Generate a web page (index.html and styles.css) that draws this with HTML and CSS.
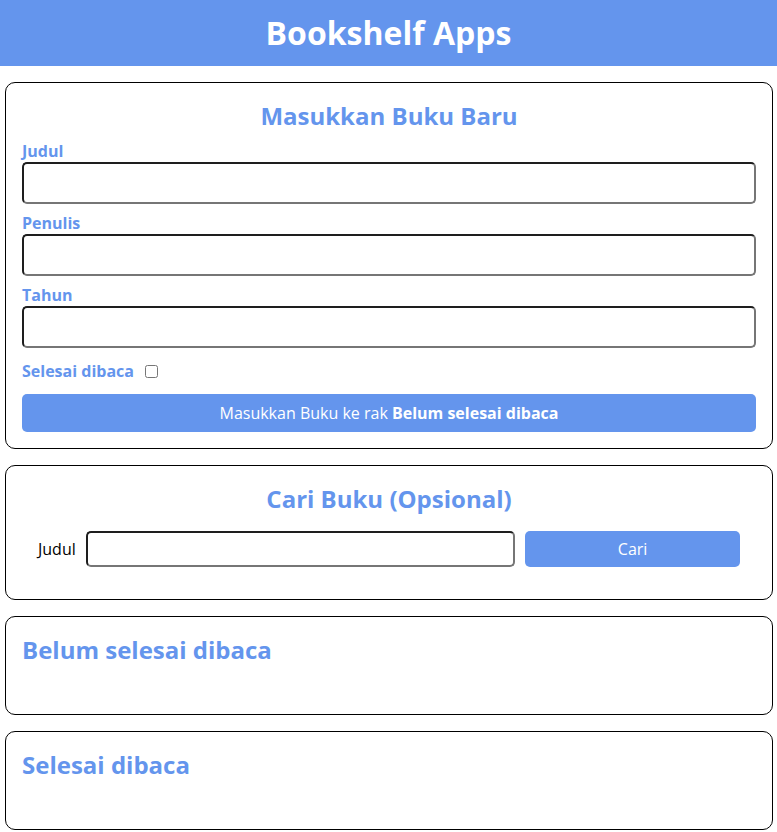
FILE: index.html
```html
<!DOCTYPE html>
<html lang="id">
<head>
<meta charset="utf-8">
<title>Bookshelf Apps</title>
<link rel="stylesheet" href="styles.css">
</head>
<body>
<header class="head-bar">
  <h1>Bookshelf Apps</h1>
</header>
<main class="main">
  <section class="input-section">
    <h2>Masukkan Buku Baru</h2>
    <form class="input-form">
      <div class="input">
        <label for="inputBookTitle">Judul</label>
        <input id="inputBookTitle" type="text">
      </div>
      <div class="input">
        <label for="inputBookAuthor">Penulis</label>
        <input id="inputBookAuthor" type="text">
      </div>
      <div class="input">
        <label for="inputBookYear">Tahun</label>
        <input id="inputBookYear" type="text">
      </div>
      <div class="input-inline">
        <label for="inputBookIsComplete">Selesai dibaca</label>
        <input id="inputBookIsComplete" type="checkbox">
      </div>
      <button class="submit-btn" type="button">Masukkan Buku ke rak <span>Belum selesai dibaca</span></button>
    </form>
  </section>
  <section class="search-section">
    <h2>Cari Buku (Opsional)</h2>
    <form class="search-form">
      <label for="searchBookTitle">Judul</label>
      <input id="searchBookTitle" type="text">
      <button class="search-btn" type="button">Cari</button>
    </form>
  </section>
  <section class="book-shelf">
    <h2>Belum selesai dibaca</h2>
    <div class="book-list"></div>
  </section>
  <section class="book-shelf">
    <h2>Selesai dibaca</h2>
    <div class="book-list"></div>
  </section>
</main>
</body>
</html>
```
FILE: styles.css
```css
* {
  padding: 0;
  margin: 0;
  box-sizing: border-box;
  font-family: "Open Sans", "Noto Sans", sans-serif;
}

body {
  background: #ffffff;
}

.head-bar {
  padding: 11px 11px 12px;
  display: flex;
  align-items: center;
  justify-content: center;
  background-color: #6495ed;
  color: #ffffff;
}

.head-bar h1 {
  font-size: 32px;
  font-weight: 700;
}

.main {
  padding: 16px 4px 0 5px;
}

h2 {
  font-size: 24px;
  font-weight: 700;
  color: #6495ed;
}

.input-section {
  display: flex;
  flex-direction: column;
  padding: 16px;
  border: 1px solid #000;
  border-radius: 10px;
}

.input-section h2 {
  text-align: center;
}

.input {
  margin: 8px 0;
}

.input label {
  display: block;
  color: #6495ed;
  font-weight: 700;
  font-size: 16px;
}

.input input,
.search-form input {
  display: block;
  width: 100%;
  font-size: 16px;
  border-style: solid;
  border-width: 2px;
  border-color: #1e1e1e #767676 #767676 #1e1e1e;
  background: #fff;
  outline: none;
}

.input input {
  padding: 8px;
  border-radius: 5px;
}

.input-inline {
  margin: 12px 0;
  display: flex;
  align-items: center;
}

.input-inline label {
  color: #6495ed;
  font-weight: 700;
  font-size: 16px;
  margin-right: 10px;
}

.input-inline input {
  width: 13px;
  height: 13px;
  margin: 3px 3px 3px 1px;
}

.submit-btn {
  background-color: #6495ed;
  color: #fff;
  border: 0;
  border-radius: 5px;
  display: block;
  width: 100%;
  padding: 8px;
  font-size: 16px;
}

.submit-btn span {
  font-weight: 700;
}

.search-section {
  margin: 16px 0;
  display: flex;
  flex-direction: column;
  align-items: center;
  padding: 16px;
  border: 1px solid #000;
  border-radius: 10px;
}

.search-form {
  padding: 16px;
  width: 100%;
  display: grid;
  grid-template-columns: auto 1fr 0.5fr;
  gap: 10px;
}

.search-form label {
  display: flex;
  align-items: center;
  font-size: 16px;
  color: #000;
}

.search-form input {
  padding: 5px;
  border-radius: 5px;
}

.search-btn {
  background-color: #6495ed;
  color: #fff;
  border: 0;
  border-radius: 5px;
  font-size: 16px;
}

.book-shelf {
  margin: 16px 0 0 0;
  border: 1px solid #000;
  padding: 16px;
  border-radius: 10px;
}

.book-list {
  padding: 16px;
}
```
